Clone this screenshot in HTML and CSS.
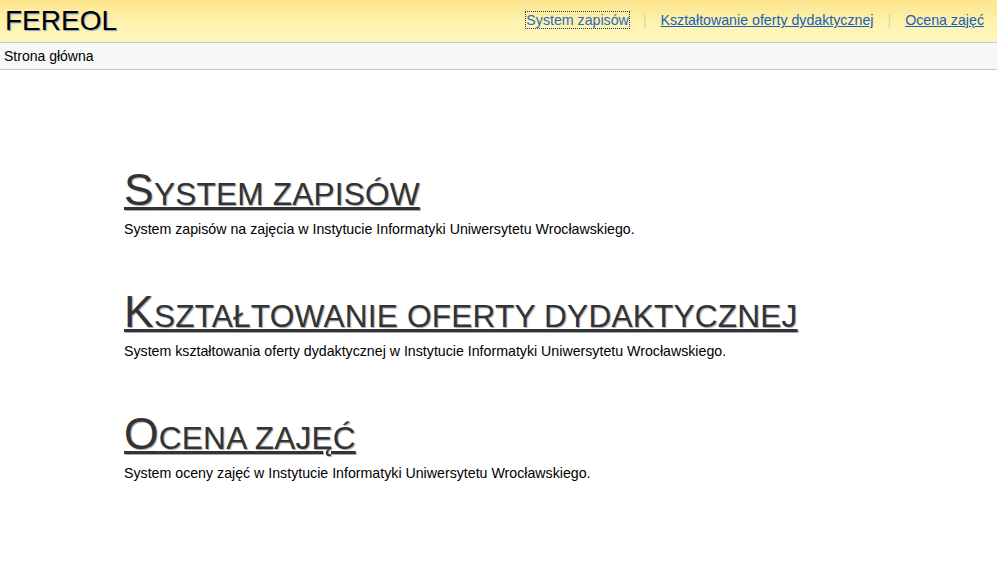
FILE: index.html
```html
<!DOCTYPE html>
<html lang="pl">
<head>
<meta charset="utf-8">
<title>FEREOL</title>
<link rel="stylesheet" href="styles.css">
</head>
<body>
<header class="topbar">
  <div class="logo">FEREOL</div>
  <nav class="mainnav">
    <a href="#" class="nav-link focused">System zapisów</a>
    <span class="sep">|</span>
    <a href="#" class="nav-link">Kształtowanie oferty dydaktycznej</a>
    <span class="sep">|</span>
    <a href="#" class="nav-link">Ocena zajęć</a>
  </nav>
</header>
<div class="crumbs">Strona główna</div>
<main class="content">
  <section class="app">
    <h2 class="app-title"><a href="#">System zapisów</a></h2>
    <p class="app-desc">System zapisów na zajęcia w Instytucie Informatyki Uniwersytetu Wrocławskiego.</p>
  </section>
  <section class="app">
    <h2 class="app-title"><a href="#">Kształtowanie oferty dydaktycznej</a></h2>
    <p class="app-desc">System kształtowania oferty dydaktycznej w Instytucie Informatyki Uniwersytetu Wrocławskiego.</p>
  </section>
  <section class="app">
    <h2 class="app-title"><a href="#">Ocena zajęć</a></h2>
    <p class="app-desc">System oceny zajęć w Instytucie Informatyki Uniwersytetu Wrocławskiego.</p>
  </section>
</main>
</body>
</html>
```
FILE: styles.css
```css
html, body {
  margin: 0;
  padding: 0;
  background: #fff;
  font-family: "Liberation Sans", Arial, sans-serif;
  color: #000;
}
.topbar {
  display: flex;
  align-items: center;
  justify-content: space-between;
  height: 42px;
  background: linear-gradient(to bottom, #fde58c 0%, #fef3b0 60%, #fff6bd 100%);
  border-bottom: 1px solid #c8c8c8;
  padding: 0 13px 0 5px;
}
.logo {
  font-size: 28px;
  line-height: 42px;
  color: #000;
  text-shadow: 1px 1px 1px #7aa3c8;
}
.mainnav {
  display: flex;
  align-items: center;
  gap: 14px;
  font-size: 14.2px;
  padding-bottom: 2px;
}
.nav-link {
  color: #1560bd;
  text-decoration: underline;
}
.nav-link.focused {
  text-decoration: none;
  outline: 1px dotted #1a3a6a;
  outline-offset: 0;
  color: #2a6bc0;
}
.sep {
  color: #d8d3b8;
}
.crumbs {
  height: 26px;
  line-height: 26px;
  background: #f7f7f7;
  border-bottom: 1px solid #c8c8c8;
  padding-left: 4px;
  font-size: 14px;
}
.content {
  padding: 100px 0 0 124px;
}
.app {
  margin-bottom: 55px;
}
.app-title {
  margin: 0;
  font-weight: normal;
  font-size: 31.6px;
  line-height: 48px;
  letter-spacing: 0.2px;
  text-transform: uppercase;
}
.app-title::first-letter {
  font-size: 44.5px;
  line-height: 0;
}
.app-title a {
  color: #333;
  text-decoration: underline;
  text-decoration-thickness: 3px;
  text-underline-offset: 2px;
  text-shadow: 1px 1px 1px #a0aab4;
}
.app-desc {
  margin: 3px 0 0;
  font-size: 14.2px;
}
```
